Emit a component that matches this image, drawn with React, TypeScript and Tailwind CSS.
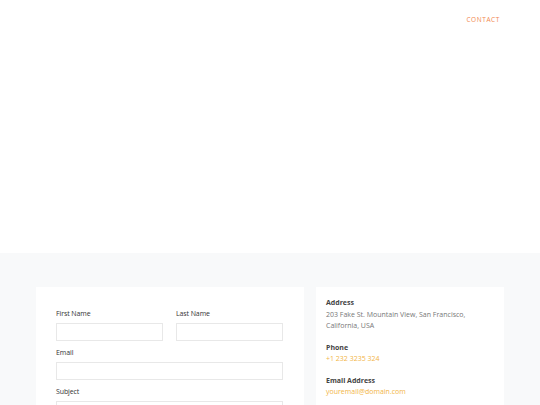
import React from "react";

const font = { fontFamily: '"Open Sans", "Liberation Sans", sans-serif' };

function Field({ label, className = "" }: { label: string; className?: string }) {
  return (
    <div className={className}>
      <div className="text-[7px] leading-[10px] text-[#333] mb-[4px] tracking-[-0.1px]">{label}</div>
      <div className="h-[18px] border border-[#e8e8e8] bg-white" />
    </div>
  );
}

export default function App() {
  return (
    <div style={font} className="w-[540px] h-[405px] overflow-hidden bg-white">
      <header className="h-[253px] bg-white flex justify-end pr-[40px] pt-[15px]">
        <span className="text-[6.5px] leading-[9px] tracking-[0.6px] text-[#f2894f]">CONTACT</span>
      </header>
      <section className="bg-[#f8f9fa] h-[152px] pt-[34px] pl-[36px] flex gap-[12px]">
        <div className="w-[268px] bg-white pl-[20px] pr-[21px] pt-[22px] flex flex-col gap-[7px]">
          <div className="flex gap-[13px]">
            <Field label="First Name" className="w-[107px]" />
            <Field label="Last Name" className="w-[107px]" />
          </div>
          <Field label="Email" />
          <Field label="Subject" />
        </div>
        <div className="w-[188px] bg-white pl-[10px] pt-[10px] text-[7px] leading-[11.5px]">
          <div className="font-bold text-[#444]">Address</div>
          <div className="text-[#777]">203 Fake St. Mountain View, San Francisco,<br />California, USA</div>
          <div className="font-bold text-[#444] mt-[10px]">Phone</div>
          <div className="text-[#f2b547]">+1 232 3235 324</div>
          <div className="font-bold text-[#444] mt-[10px]">Email Address</div>
          <div className="text-[#f2b547]">youremail@domain.com</div>
        </div>
      </section>
    </div>
  );
}
